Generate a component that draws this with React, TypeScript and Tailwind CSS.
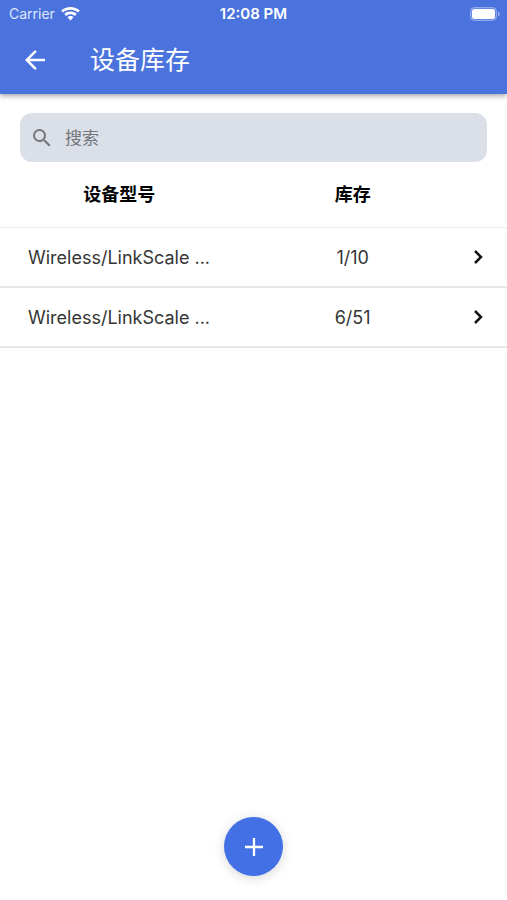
import React from "react";

interface Device {
  id: number;
  model: string;
  stock: string;
}

const devices: Device[] = [
  { id: 1, model: "Wireless/LinkScale ...", stock: "1/10" },
  { id: 2, model: "Wireless/LinkScale ...", stock: "6/51" },
];

function WifiIcon() {
  return (
    <svg width="19" height="14" viewBox="0 0 19 14" fill="currentColor" aria-hidden="true">
      <path d="M9.500 0C6 0 2.700 1.300 0.200 3.600L2 5.600C4 3.800 6.600 2.800 9.500 2.800S15 3.800 17 5.600L18.800 3.600C16.300 1.300 13 0 9.500 0Z" />
      <path d="M9.500 4.500C7.200 4.500 5 5.300 3.300 6.900L5.200 8.900C6.400 7.800 7.800 7.200 9.500 7.200S12.600 7.800 13.800 8.900L15.700 6.900C14 5.300 11.800 4.500 9.500 4.500Z" />
      <path d="M9.500 9C8.300 9 7.300 9.500 6.500 10.300L9.500 13.600L12.500 10.300C11.700 9.500 10.700 9 9.500 9Z" />
    </svg>
  );
}

function BatteryIcon() {
  return (
    <svg width="30" height="14" viewBox="0 0 30 14" aria-hidden="true">
      <rect x="0.500" y="0.500" width="26" height="13" rx="4" fill="#ffffff" fillOpacity="0.15" stroke="#ffffff" strokeOpacity="0.35" />
      <rect x="2" y="2" width="23" height="10" rx="2.500" fill="#ffffff" />
      <path d="M28 4.500C29.200 5 29.600 6 29.600 7S29.200 9 28 9.500Z" fill="#ffffff" fillOpacity="0.45" />
    </svg>
  );
}

function StatusBar() {
  return (
    <div className="grid h-7 grid-cols-3 items-center px-[7px] text-sm leading-5">
      <div className="flex items-center gap-[6px] pl-[2px]">
        <span className="text-[#dfe6fb]">Carrier</span>
        <WifiIcon />
      </div>
      <span className="text-center text-[15px] font-semibold whitespace-nowrap">12:08 PM</span>
      <div className="flex justify-end">
        <BatteryIcon />
      </div>
    </div>
  );
}

function AppHeader() {
  return (
    <header className="relative bg-[#4b73de] text-white shadow-[0_2px_5px_rgba(0,0,0,0.35)]">
      <StatusBar />
      <div className="flex h-[66px] items-center gap-10 px-5 pb-[2px]">
        <button type="button" aria-label="返回" className="flex h-8 w-[30px] items-center justify-center">
          <svg width="30" height="30" viewBox="0 0 24 24" fill="currentColor" aria-hidden="true">
            <path d="M20 11H7.830l5.590-5.590L12 4l-8 8 8 8 1.410-1.410L7.830 13H20v-2z" />
          </svg>
        </button>
        <h1 className="text-[25px] leading-8 font-normal">设备库存</h1>
      </div>
    </header>
  );
}

function SearchBox() {
  return (
    <label className="mx-5 mt-[19px] flex h-[49px] items-center gap-[11px] rounded-xl bg-[#dbdfe8] px-[10px]">
      <svg width="24" height="24" viewBox="0 0 24 24" fill="#757779" aria-hidden="true">
        <path d="M15.500 14h-.79l-.28-.27A6.471 6.471 0 0 0 16 9.500 6.500 6.500 0 1 0 9.500 16c1.610 0 3.090-.59 4.230-1.570l.27.28v.79l5 4.990L20.490 19l-4.990-5zm-6 0C7.010 14 5 11.990 5 9.500S7.010 5 9.500 5 14 7.010 14 9.500 11.990 14 9.500 14z" />
      </svg>
      <input
        type="search"
        aria-label="搜索"
        placeholder="搜索"
        className="min-w-0 flex-1 bg-transparent text-[17px] leading-6 text-[#303030] outline-none placeholder:text-[#74777c]"
      />
    </label>
  );
}

function DeviceTable() {
  return (
    <table className="w-full table-fixed border-collapse text-lg leading-6">
      <colgroup>
        <col className="w-[47%]" />
        <col />
        <col className="w-10" />
      </colgroup>
      <thead>
        <tr className="h-[65px] border-b border-[#ebebeb] text-black">
          <th scope="col" className="p-0 pt-[2px] font-bold">设备型号</th>
          <th scope="col" className="p-0 pt-[2px] font-bold">库存</th>
          <td />
        </tr>
      </thead>
      <tbody>
        {devices.map((device) => (
          <tr key={device.id} className="h-[60px] border-b-2 border-[#e8e8e8] text-[#353535]">
            <td className="truncate p-0 pt-[2px] pl-7">{device.model}</td>
            <td className="p-0 pt-[2px] text-center">{device.stock}</td>
            <td className="p-0">
              <button type="button" aria-label="查看详情" className="flex h-8 w-[22px] items-center justify-center text-[#151515]">
                <svg width="22" height="26" viewBox="0 0 22 26" fill="none" stroke="currentColor" strokeWidth="2.500" aria-hidden="true">
                  <path d="M8 7L14 13L8 19" />
                </svg>
              </button>
            </td>
          </tr>
        ))}
      </tbody>
    </table>
  );
}

export default function App() {
  return (
    <div className="flex min-h-screen flex-col bg-white font-['Inter','Noto_Sans_CJK_SC',sans-serif]">
      <AppHeader />
      <main className="flex flex-1 flex-col">
        <SearchBox />
        <DeviceTable />
        <button
          type="button"
          aria-label="添加设备"
          className="mx-auto mt-auto mb-6 flex size-[59px] items-center justify-center rounded-full bg-[#4370e4] text-white shadow-[0_2px_12px_rgba(0,0,0,0.16)]"
        >
          <svg width="18" height="18" viewBox="0 0 18 18" fill="none" stroke="currentColor" strokeWidth="2.300" aria-hidden="true">
            <path d="M9 0V18M0 9H18" />
          </svg>
        </button>
      </main>
    </div>
  );
}
